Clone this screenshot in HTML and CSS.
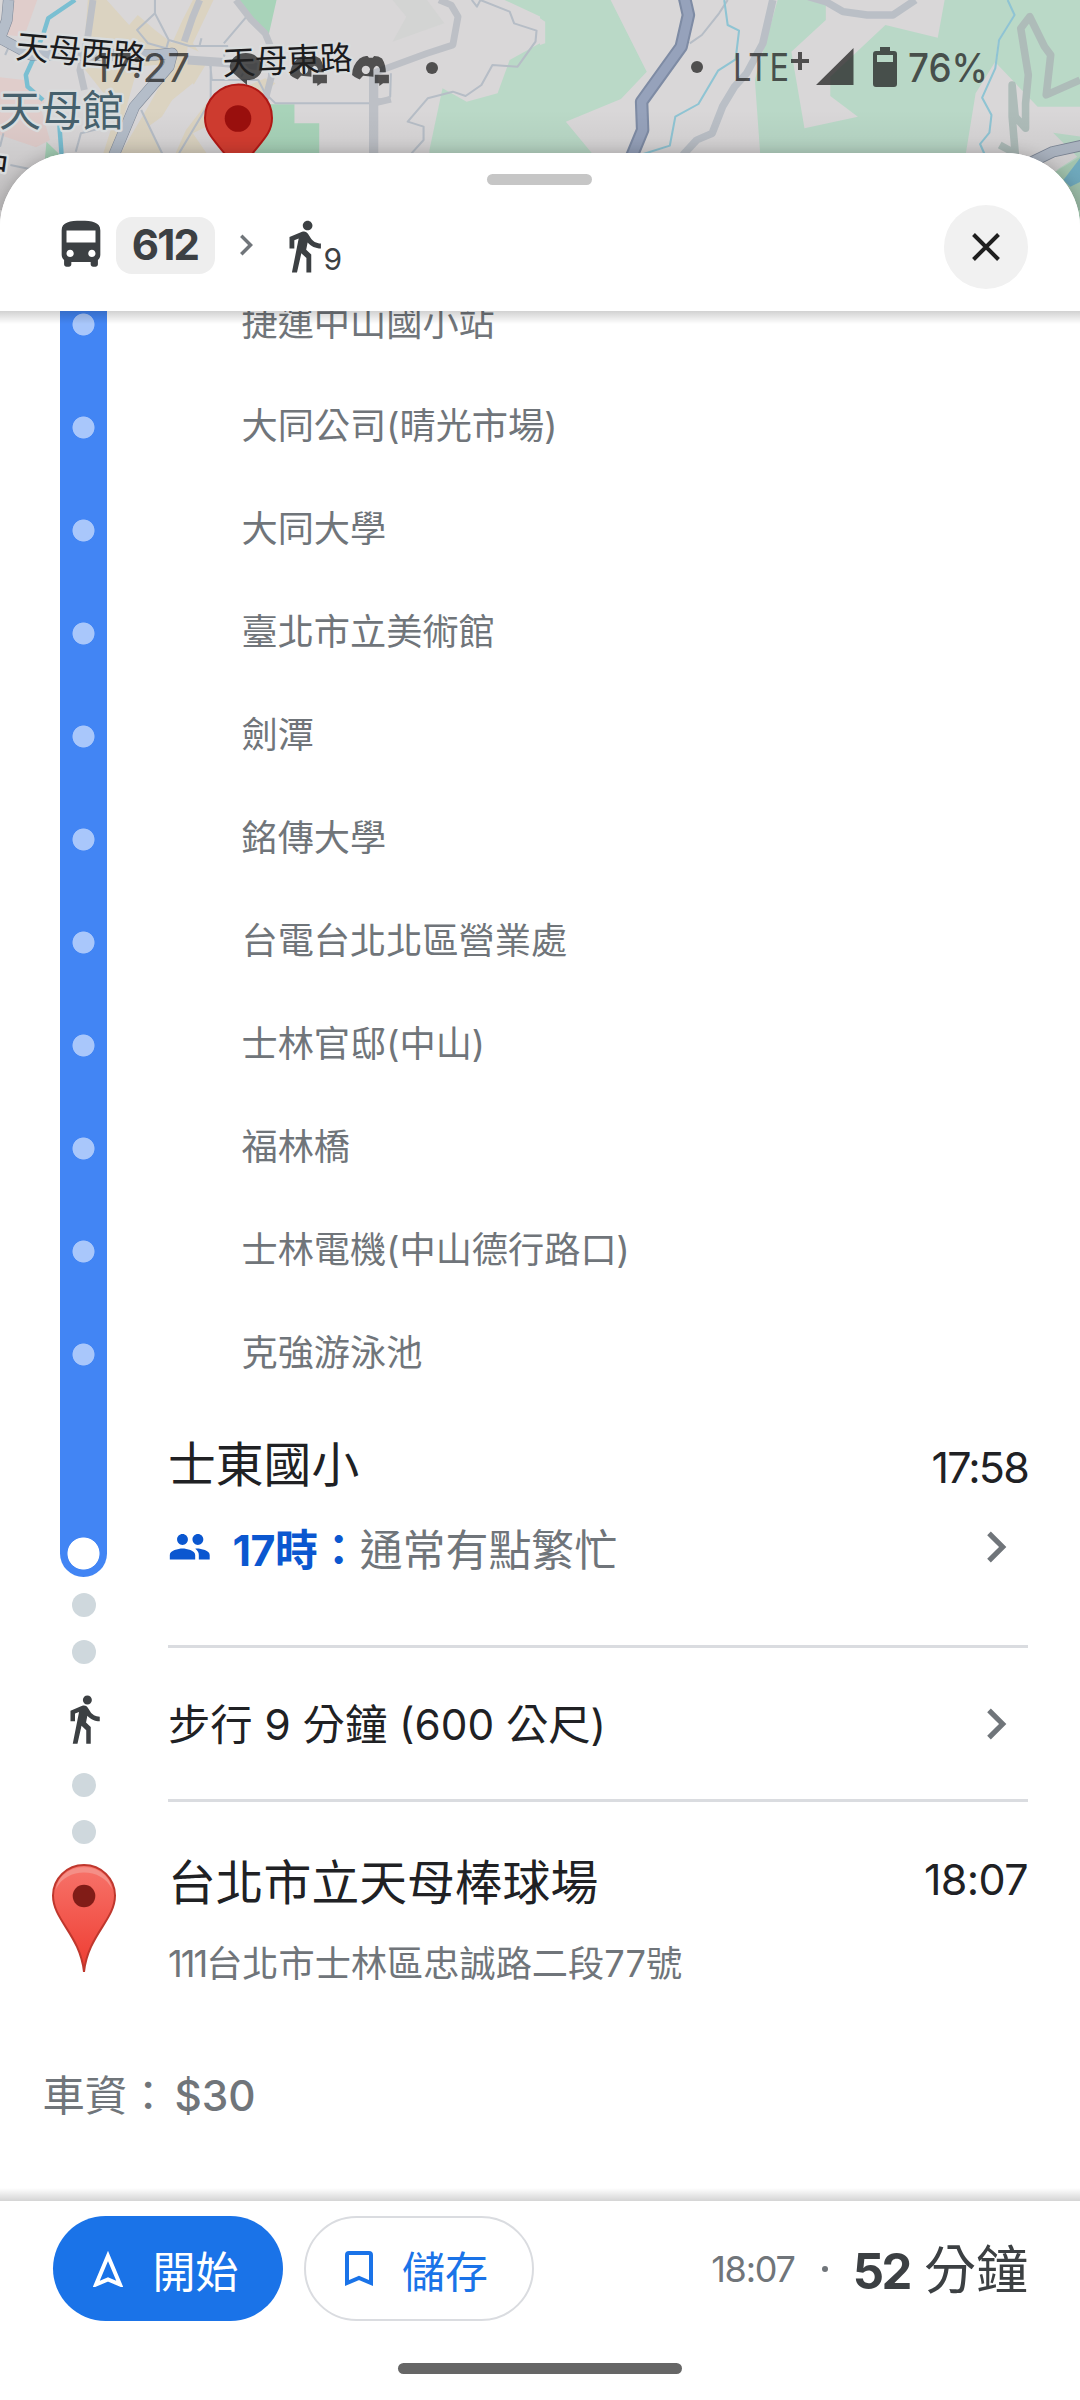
FILE: index.html
```html
<!DOCTYPE html>
<html lang="zh-Hant-TW">
<head>
<meta charset="utf-8">
<title>612 公車路線</title>
<link rel="stylesheet" href="styles.css">
</head>
<body>
<svg width="0" height="0" class="defs" aria-hidden="true">
  <defs>
    <symbol id="walk" viewBox="0 0 24 24"><path d="M13.5 5.5c1.1 0 2-.9 2-2s-.9-2-2-2-2 .9-2 2 .9 2 2 2zM9.8 8.9L7 23h2.1l1.8-8 2.1 2v6h2v-7.5l-2.1-2 .6-3C14.8 12 16.8 13 19 13v-2c-1.9 0-3.5-1-4.3-2.4l-1-1.6c-.4-.6-1-1-1.7-1-.3 0-.5.1-.8.1L6 8.3V13h2V9.6l1.8-.7"/></symbol>
    <symbol id="chevron" viewBox="0 0 24 24"><path d="M10 6 8.59 7.41 13.17 12l-4.58 4.59L10 18l6-6z"/></symbol>
    <symbol id="chat" viewBox="0 0 107 90"><path fill-rule="evenodd" d="M22 10Q34 1 45 3L49 8H60L64 3Q77 3 87 10Q98 28 98 50H62V63L32 60L22 71Q8 66 0 58Q0 30 22 10ZM40 31a12 12 0 1 0 .1 0ZM72 31Q60 34 62 50H80Q84 36 72 31Z"/><path d="M66 57h41v25H90l-11 8v-8H66z"/></symbol>
  </defs>
</svg>
<div class="screen">
  <svg class="map" width="1080" height="240" viewBox="0 0 1080 240">
    <defs>
      <linearGradient id="shade" x1="0" y1="0" x2="0" y2="1"><stop offset="0" stop-color="#000" stop-opacity="0"/><stop offset="1" stop-color="#000" stop-opacity=".12"/></linearGradient>
    </defs>
    <rect width="1080" height="240" fill="#d9d7d8"/>
    <g transform="scale(.34437 .33333)" fill="none" stroke-linejoin="round">
      <path fill="#e0cdcb" d="M25 0H108L70 110L20 105L40 40ZM0 232L70 240L130 300L120 330L145 420L105 442L0 405Z"/>
      <path fill="#dbd3c1" d="M255 0H310L375 75L400 45L450 90L500 130L530 60L560 0H620L560 130L600 190L530 310H600L770 235L800 250L700 330L560 400L600 460H350L430 320L500 190L400 200L330 460H300L340 330L240 200Z"/>
      <path fill="#d9d7d8" d="M545 140L600 165L605 190L540 180ZM560 250L600 310L540 390L510 460H470L430 380L470 350L500 300Z"/>
      <path fill="#a8d3b9" d="M695 0H803L778 115L720 50ZM780 313H855V370H927V480H700ZM135 425L190 480H130Z"/>
      <path fill="#bad9c7" d="M1465 0H1570V50ZM1568 130L1480 180L1445 280L1355 305L1285 265L1247 450V500H1570Z"/>
      <path fill="#d3d4d3" d="M1140 0L1180 50L1140 125L1290 70L1240 0Z"/>
      <path stroke="#7abfd2" stroke-width="13" d="M218 0L140 55L125 105L95 180L75 225L80 260L125 300M172 370L180 480"/>
      <g stroke="#b6bdc6" stroke-width="6">
        <path d="M450 0V40L398 90L430 130L500 150M612 190V300L520 460M410 330L480 480M450 40L490 120L480 155M490 120L550 138H660L650 170M716 50L650 130M585 115L580 135M610 190L615 240H750L770 280L800 310H1080M740 165L700 230M0 440L10 400M220 455L235 400L330 375M30 495L100 510M15 165L30 130"/>
        <path d="M1370 0L1385 20L1395 0L1480 35L1493 70L1558 92L1555 125L1503 200L1430 195L1398 255L1352 288L1315 275L1242 295L1184 365L1230 380V420L1195 460M1135 220L1133 290L1115 300L1080 295"/>
      </g>
      <g stroke="#bdc0c6" stroke-width="20">
        <path d="M270 0L255 110L232 210L245 270M580 0L560 50L535 125M685 0L730 60L770 100L790 150L788 230L770 300"/>
        <path stroke-width="27" d="M545 180L640 187L780 200M1085 210V480"/>
        <path d="M1082 220L1240 160L1315 135L1330 50L1310 15L1275 0M1085 310L1135 298" />
      </g>
      <path stroke="#7f8897" stroke-width="33" d="M25 0L20 60L0 115L90 165H450L500 160L490 200L390 320L325 480"/>
      <path stroke="#b4bdc9" stroke-width="30" d="M25 0L20 60L0 115L90 165H450L500 160L490 200L390 320L325 480"/>
    </g>
    <g transform="translate(540) scale(.34437 .33333)" fill="none" stroke-linejoin="round">
      <path fill="#bad9c7" d="M0 0H205L310 215L235 297L75 365L155 465H0Z"/>
      <path fill="#d9d7d8" d="M0 55L15 65V130L0 135Z"/>
      <path fill="#b9d8c7" d="M690 0H830V60L730 155L768 385L923 350L843 288V230L1003 75L1155 113L1175 0H1360L1375 45L1330 120L1322 185L1265 280L1235 470H640L624 240Z"/>
      <path fill="#bad9c7" d="M1358 0H1570V320H1445L1325 190L1335 120L1378 45ZM1490 398L1570 410V500L1500 510L1560 470Z"/>
      <path fill="#acd0b9" d="M1455 540L1570 470V760H1455Z"/>
      <path fill="#77b5ca" d="M1568 475L1520 540L1540 560L1570 545Z"/>
      <path stroke="#b6bdc6" stroke-width="6" d="M545 0L520 40L470 105L435 130"/>
      <path stroke="#8fc4d3" stroke-width="6" d="M535 0L545 75L578 92L568 178L517 212L460 312L393 350L377 437L300 462M1358 0L1378 45L1333 120L1322 205L1284 293L1311 345L1305 398L1278 432L1292 465"/>
      <g stroke="#babfc6" stroke-width="22">
        <path d="M676 0L647 130L600 220L565 260L530 320L500 400L455 420L415 465M780 -10L830 5L880 35L950 45H1025L1090 0"/>
        <path stroke="#aebcb9" d="M1568 240L1470 285L1483 165L1465 140L1422 50L1396 85L1418 225L1410 310V385L1380 350L1371 255V350L1380 460L1335 435"/>
      </g>
      <path stroke="#7e8ba4" stroke-width="39" d="M420 -5L431 45L410 140L295 305L298 390L262 480"/>
      <path stroke="#96a2bb" stroke-width="27" d="M420 -5L431 45L410 140L295 305L298 390L262 480"/>
      <path stroke="#7d8797" stroke-width="34" d="M1400 500L1490 455L1580 435"/>
      <path stroke="#b0b9c6" stroke-width="29" d="M1400 500L1490 455L1580 435"/>
    </g>
    <rect y="110" width="1080" height="100" fill="url(#shade)"/>
    <path d="M225 154C213 139 205 132 205 118A33.500 33.500 0 0 1 272 118C272 132 264 139 252 154L238 172Z" fill="#cd3b2f" stroke="#ae1815" stroke-width="2"/>
    <circle cx="238" cy="118.500" r="13.300" fill="#990f0d"/>
    <g class="map-label">
      <text x="15" y="58" textLength="130" transform="rotate(5 15 58)">天母西路</text>
      <text x="223" y="75" textLength="130" transform="rotate(-2.500 223 75)">天母東路</text>
      <text x="-26" y="174" transform="rotate(8 -26 174)">中</text>
      <text class="place" x="-1" y="126" textLength="125">天母館</text>
    </g>
    <g class="status" fill="#222" fill-opacity=".75">
      <text x="93" y="82" textLength="97" lengthAdjust="spacingAndGlyphs" font-size="40">17:27</text>
      <path d="M246 53a16 15 0 0 1 16 15c0 7-6 12-15 12v5l-15-13q-3-3-2-7a16 14 0 0 1 16-12z"/>
      <use href="#chat" x="290" y="55" width="37" height="31"/>
      <use href="#chat" x="352" y="55" width="37" height="31"/>
      <circle cx="432" cy="68" r="6"/><circle cx="697" cy="67" r="6"/>
      <text x="733" y="81" textLength="56" lengthAdjust="spacingAndGlyphs" font-size="38" font-weight="400">LTE</text>
      <path d="M798 52h4v7h7v4h-7v7h-4v-7h-7v-4h7zM816 85L853.500 48V85z"/>
      <path fill-rule="evenodd" d="M880 47h10v4h4q3 0 3 3v30q0 3-3 3h-18q-3 0-3-3V54q0-3 3-3h4zM877 55v7h16v-7z"/>
      <text x="908" y="82" textLength="80" lengthAdjust="spacingAndGlyphs" font-size="40" font-weight="500">76%</text>
    </g>
  </svg>

  <main class="sheet">
    <header class="sheet-head">
      <div class="handle"></div>
      <div class="summary">
        <svg class="bus" viewBox="0 0 24 24"><path d="M4 16c0 .88.39 1.67 1 2.22V20c0 .55.45 1 1 1h1c.55 0 1-.45 1-1v-1h8v1c0 .55.45 1 1 1h1c.55 0 1-.45 1-1v-1.780c.61-.55 1-1.340 1-2.220V6c0-3.500-3.580-4-8-4s-8 .5-8 4v10zm3.500 1c-.83 0-1.500-.67-1.500-1.500S6.670 14 7.500 14s1.500.67 1.500 1.500S8.330 17 7.500 17zm9 0c-.83 0-1.500-.67-1.500-1.500s.67-1.500 1.500-1.500 1.500.67 1.500 1.500-.67 1.500-1.500 1.500zM18 11H6V6h12v5z"/></svg>
        <span class="route">612</span>
        <svg class="step"><use href="#chevron"/></svg>
        <svg class="walk"><use href="#walk"/></svg>
        <sub class="walk-min">9</sub>
        <button class="close" aria-label="關閉"><svg width="30" height="30" viewBox="0 0 30 30"><path d="M2.500 2.500 27.500 27.500M27.500 2.500 2.500 27.500" stroke="#1f1f1f" stroke-width="4"/></svg></button>
      </div>
    </header>

    <section class="trip">
      <ul class="stops">
        <li><i></i><span>捷運中山國小站</span></li>
        <li><i></i><span>大同公司(晴光市場)</span></li>
        <li><i></i><span>大同大學</span></li>
        <li><i></i><span>臺北市立美術館</span></li>
        <li><i></i><span>劍潭</span></li>
        <li><i></i><span>銘傳大學</span></li>
        <li><i></i><span>台電台北北區營業處</span></li>
        <li><i></i><span>士林官邸(中山)</span></li>
        <li><i></i><span>福林橋</span></li>
        <li><i></i><span>士林電機(中山德行路口)</span></li>
        <li><i></i><span>克強游泳池</span></li>
      </ul>
      <div class="end">
        <div class="rail">
          <div class="rail-end"></div>
          <b class="dot"></b><b class="dot"></b>
          <svg class="rail-walk"><use href="#walk"/></svg>
          <b class="dot"></b><b class="dot"></b>
          <svg class="pin" width="64" height="110" viewBox="0 0 64 110">
            <defs><linearGradient id="red" x1="0" y1="0" x2="0" y2="1"><stop offset="0" stop-color="#f7746b"/><stop offset="1" stop-color="#ee3b30"/></linearGradient></defs>
            <path d="M32 108C28 71 1 56 1 31.500A31 30.500 0 0 1 63 31.500C63 56 36 71 32 108Z" fill="url(#red)" stroke="#bf372d" stroke-width="2"/>
            <path d="M4 25C9-4 55-4 60 25C50 3 14 3 4 25Z" fill="#f58f87"/>
            <circle cx="32" cy="32" r="11.300" fill="#811c17"/>
          </svg>
        </div>
        <div class="details">
          <div class="row arrive"><h2>士東國小</h2><time>17:58</time></div>
          <div class="row crowd">
            <svg class="people" viewBox="0 0 24 24"><path d="M16.500 11c1.660 0 2.990-1.340 2.990-3S18.160 5 16.500 5s-3 1.340-3 3 1.340 3 3 3zm-8.500 0c1.660 0 2.990-1.340 2.990-3S9.660 5 8 5 5 6.340 5 8s1.340 3 3 3zm0 2c-2.330 0-7 1.170-7 3.500V19h14v-2.500c0-2.330-4.670-3.500-7-3.500zm8 0c-.29 0-.62.02-.97.05 1.160.84 1.970 1.970 1.970 3.450V19h6v-2.500c0-2.330-4.670-3.500-7-3.500z"/></svg>
            <strong>17時：</strong><span>通常有點繁忙</span>
            <svg class="go"><use href="#chevron"/></svg>
          </div>
          <hr>
          <div class="row walking"><span>步行 9 分鐘 (600 公尺)</span><svg class="go"><use href="#chevron"/></svg></div>
          <hr>
          <div class="row dest"><h2>台北市立天母棒球場</h2><time>18:07</time></div>
          <p class="address"><span class="num">111</span>台北市士林區忠誠路二段77號</p>
        </div>
      </div>
      <p class="fare">車資：<span>$30</span></p>
    </section>

    <footer class="actions">
      <div class="bar">
        <button class="btn start"><svg width="30" height="37" viewBox="0 0 30 37"><path d="M15 6 27 34.500 15 29.500 3 34.500Z" fill="none" stroke="#fff" stroke-width="4"/></svg>開始</button>
        <button class="btn save"><svg width="28" height="36" viewBox="0 0 28 36"><path d="M2 4Q2 2 4 2H24Q26 2 26 4V32L14 27 2 32Z" fill="none" stroke="#1a73e8" stroke-width="4"/></svg>儲存</button>
        <span class="eta">18:07</span><span class="sep"></span><span class="total"><b>52</b>分鐘</span>
      </div>
      <div class="home"></div>
    </footer>
  </main>
</div>
</body>
</html>
```
FILE: styles.css
```css
* { box-sizing: border-box; }
body { margin: 0; font-family: Inter, "Noto Sans CJK TC", sans-serif; color: #202124; }
.defs { position: absolute; }
h2, p, ul { margin: 0; padding: 0; font-weight: 400; }
button { font: inherit; padding: 0; border: 0; }
svg { flex: none; display: block; }
.screen { position: relative; display: flow-root; width: 1080px; height: 2400px; overflow: hidden; background: #fff; }
.map { position: absolute; top: 0; left: 0; }
.map-label { font-family: "Noto Sans CJK TC", sans-serif; font-size: 33px; fill: #1b1b1d; stroke: #d9dcdd; stroke-width: 5px; paint-order: stroke; stroke-linejoin: round; }
.map-label .place { font-size: 42px; fill: #46606c; }

.sheet { position: relative; height: 2247px; margin-top: 153px; display: flex; flex-direction: column; background: #fff; border-radius: 74px 74px 0 0; box-shadow: 0 0 16px rgba(0, 0, 0, .22); }
.sheet-head { position: relative; z-index: 1; flex: none; height: 158px; padding-top: 21px; background: #fff; border-radius: 74px 74px 0 0; }
.sheet-head::after { content: ""; position: absolute; left: 0; right: 0; top: 100%; height: 13px; background: linear-gradient(rgba(0, 0, 0, .18), transparent); }
.handle { width: 105px; height: 11px; margin: 0 488px 0 487px; border-radius: 6px; background: #c6c6c6; }
.summary { display: flex; align-items: center; height: 84px; margin-top: 20px; padding: 0 52px 0 51.5px; fill: #3c4043; color: #3c4043; }
.bus { width: 58px; height: 58px; margin-top: -4px; }
.route { width: 99px; height: 57px; margin: -3px 0 0 6px; border-radius: 16px; background: #eee; font-size: 42px; font-weight: 650; line-height: 56px; letter-spacing: -1.800px; text-align: center; }
.step { width: 42px; height: 42px; margin: -4px 0 0 10px; fill: #70757a; }
.walk { width: 58px; height: 58px; margin: -2px 0 0 8px; }
.walk-min { font-size: 30px; line-height: 36px; margin: 24px 0 0 -9px; }
.close { display: grid; place-items: center; width: 84px; height: 84px; margin-left: auto; border-radius: 50%; background: #f1f1f1; }

.trip { flex: 1; min-height: 0; overflow: hidden; }
.stops { list-style: none; margin-top: -38.5px; padding-bottom: 1px; background: linear-gradient(90deg, transparent 60px, #4285f4 60px, #4285f4 107px, transparent 107px); }
.stops li { display: flex; align-items: center; height: 103px; gap: 134.5px; padding-left: 60px; font-size: 36.2px; color: #70757a; }
.stops li span { padding-bottom: 7.5px; }
.stops i { width: 47px; height: 103px; background: radial-gradient(circle, #a9c7fb 10.6px, #4285f4 11.4px); }
.end { display: grid; grid-template-columns: 168px 860px; }
.rail { display: flex; flex-direction: column; align-items: center; }
.rail-end { width: 47px; height: 170.5px; margin: 0 1px 16px 0; border-radius: 0 0 24px 24px; background: radial-gradient(circle at 50% 146.5px, #fff 15.600px, #4285f4 16.400px); }
.dot { width: 24px; height: 24px; border-radius: 50%; background: #cfd8dd; }
.dot + .dot { margin-top: 23px; }
.rail-walk { width: 54px; height: 54px; margin: 28px 0 27px; fill: #3c4043; }
.pin { margin-top: 20px; }
.row { display: flex; align-items: center; }
.row h2 { padding-bottom: 7px; font-size: 47.800px; }
.row time { margin: 3px 0 0 auto; font-size: 43px; letter-spacing: -1.800px; }
.arrive { height: 117px; }
.crowd { height: 46px; margin-bottom: 75.5px; font-size: 42.900px; color: #70757a; white-space: nowrap; }
.people { width: 43.500px; height: 43.500px; fill: #0b57d0; }
.crowd strong { margin-left: 21px; font-weight: 650; color: #0b57d0; letter-spacing: -.5px; }
.go { width: 62px; height: 62px; margin: 0 1px 0 auto; fill: #70757a; }
hr { height: 3px; margin: 0; border: 0; background: #dadce0; }
.walking { height: 151px; font-size: 42.300px; }
.walking span { padding-bottom: 4px; }
.dest { height: 60px; margin-top: 51px; }
.dest time { margin-top: -8px; letter-spacing: -.6px; }
.address { margin-top: 26px; line-height: 50px; font-size: 36.200px; color: #70757a; white-space: nowrap; }
.num { letter-spacing: -2px; }
.fare { margin-top: 82px; padding-left: 42.5px; line-height: 50px; font-size: 42.300px; color: #70757a; }
.fare span { margin-left: 5px; font-weight: 500; }

.actions { position: relative; flex: none; height: 199px; padding-top: 15px; background: #fff; }
.actions::before { content: ""; position: absolute; left: 0; right: 0; bottom: 100%; height: 13px; background: linear-gradient(transparent, rgba(0, 0, 0, .17)); }
.bar { display: flex; align-items: center; height: 105px; padding: 0 52px 0 53px; }
.btn { display: flex; align-items: center; width: 230px; height: 105px; padding-left: 40px; border-radius: 53px; font-size: 43px; gap: 29.5px; }
.start { background: #1a73e8; color: #fff; }
.save { margin-left: 21px; padding-left: 38.500px; border: 2.600px solid #dadce0; background: #fff; color: #1a73e8; }
.eta { margin-left: auto; font-size: 36px; letter-spacing: -1.200px; color: #70757a; }
.sep { width: 6px; height: 6px; margin: 0 25px 0 27px; border-radius: 50%; background: #70757a; }
.total { padding-bottom: 4px; font-size: 52px; color: #3c4043; }
.total b { margin-right: 14px; font-size: 49px; font-weight: 650; letter-spacing: -2.500px; }
.home { width: 284px; height: 11px; margin: 42px auto 0; border-radius: 6px; background: #666; }
```
